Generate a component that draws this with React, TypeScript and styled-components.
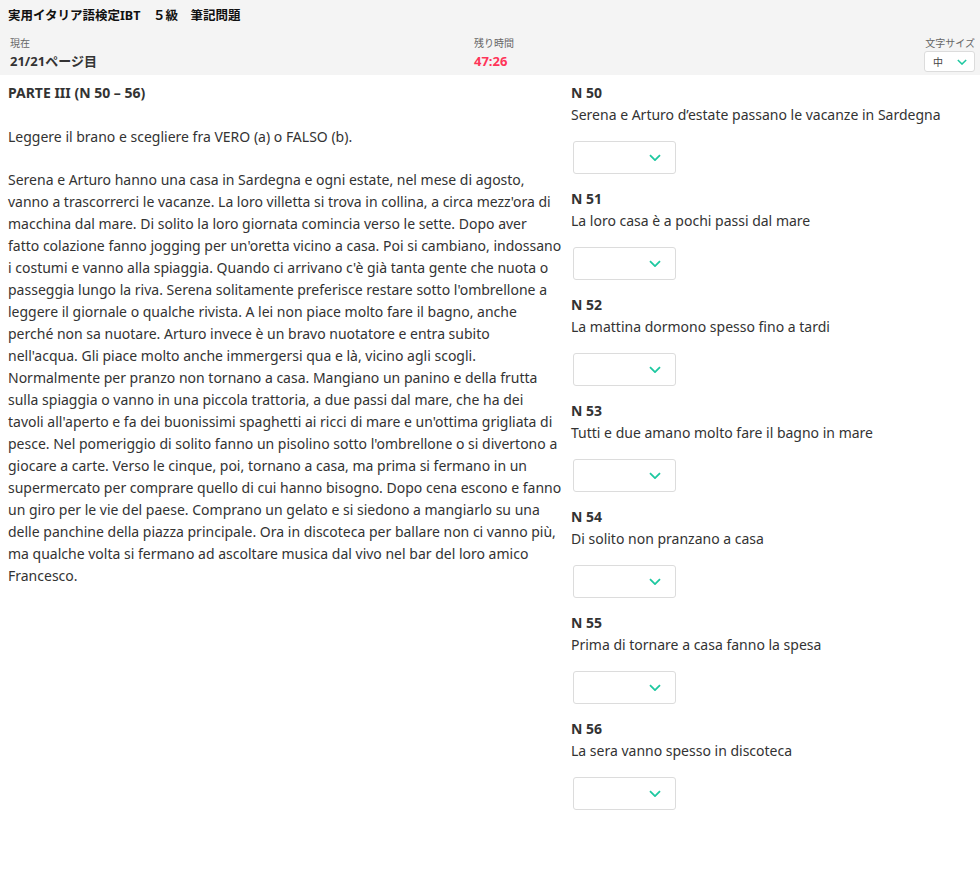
import React from 'react';
import styled, { createGlobalStyle } from 'styled-components';

const colors = {
  text: '#333333',
  label: '#666666',
  headerBg: '#f4f4f4',
  border: '#dcdcdc',
  accent: '#1ec8a0',
  timer: '#ff3559',
};

const GlobalStyle = createGlobalStyle`
  body {
    margin: 0;
    background: #ffffff;
    font-family: 'Noto Sans', 'Noto Sans CJK JP', sans-serif;
    color: ${colors.text};
  }
`;

// line breaks follow the exam page
const passageLines = [
  'Serena e Arturo hanno una casa in Sardegna e ogni estate, nel mese di agosto,',
  "vanno a trascorrerci le vacanze. La loro villetta si trova in collina, a circa mezz'ora di",
  'macchina dal mare. Di solito la loro giornata comincia verso le sette. Dopo aver',
  "fatto colazione fanno jogging per un'oretta vicino a casa. Poi si cambiano, indossano",
  "i costumi e vanno alla spiaggia. Quando ci arrivano c'è già tanta gente che nuota o",
  "passeggia lungo la riva. Serena solitamente preferisce restare sotto l'ombrellone a",
  'leggere il giornale o qualche rivista. A lei non piace molto fare il bagno, anche',
  'perché non sa nuotare. Arturo invece è un bravo nuotatore e entra subito',
  "nell'acqua. Gli piace molto anche immergersi qua e là, vicino agli scogli.",
  'Normalmente per pranzo non tornano a casa. Mangiano un panino e della frutta',
  'sulla spiaggia o vanno in una piccola trattoria, a due passi dal mare, che ha dei',
  "tavoli all'aperto e fa dei buonissimi spaghetti ai ricci di mare e un'ottima grigliata di",
  "pesce. Nel pomeriggio di solito fanno un pisolino sotto l'ombrellone o si divertono a",
  'giocare a carte. Verso le cinque, poi, tornano a casa, ma prima si fermano in un',
  'supermercato per comprare quello di cui hanno bisogno. Dopo cena escono e fanno',
  'un giro per le vie del paese. Comprano un gelato e si siedono a mangiarlo su una',
  'delle panchine della piazza principale. Ora in discoteca per ballare non ci vanno più,',
  'ma qualche volta si fermano ad ascoltare musica dal vivo nel bar del loro amico',
  'Francesco.',
];

const questions = [
  { no: 50, text: 'Serena e Arturo d’estate passano le vacanze in Sardegna' },
  { no: 51, text: 'La loro casa è a pochi passi dal mare' },
  { no: 52, text: 'La mattina dormono spesso fino a tardi' },
  { no: 53, text: 'Tutti e due amano molto fare il bagno in mare' },
  { no: 54, text: 'Di solito non pranzano a casa' },
  { no: 55, text: 'Prima di tornare a casa fanno la spesa' },
  { no: 56, text: 'La sera vanno spesso in discoteca' },
];

const Chevron: React.FC<{ size?: number }> = ({ size = 12 }) => (
  <svg width={size} height={size * 0.6} viewBox="0 0 12 7" fill="none">
    <path d="M1 1l5 5 5-5" stroke={colors.accent} strokeWidth="1.8" />
  </svg>
);

export default function App() {
  return (
    <Page>
      <GlobalStyle />
      <Header>
        <Title>実用イタリア語検定IBT　５級　筆記問題</Title>
        <StatusRow>
          <StatusItem>
            <StatusLabel>現在</StatusLabel>
            <StatusValue>21/21ページ目</StatusValue>
          </StatusItem>
          <StatusItem>
            <StatusLabel>残り時間</StatusLabel>
            <StatusValue warn>47:26</StatusValue>
          </StatusItem>
          <StatusItem align="right">
            <StatusLabel>文字サイズ</StatusLabel>
            <SizeSelect>
              <span>中</span>
              <Chevron size={10} />
            </SizeSelect>
          </StatusItem>
        </StatusRow>
      </Header>
      <Content>
        <Passage>
          <SectionTitle>PARTE III (N 50 – 56)</SectionTitle>
          <Paragraph>Leggere il brano e scegliere fra VERO (a) o FALSO (b).</Paragraph>
          <Paragraph>
            {passageLines.map((line, i) => (
              <Line key={i}>{line}</Line>
            ))}
          </Paragraph>
        </Passage>
        <QuestionList>
          {questions.map((q) => (
            <Question key={q.no}>
              <QuestionNo>N {q.no}</QuestionNo>
              <QuestionText>{q.text}</QuestionText>
              <AnswerSelect>
                <Chevron />
              </AnswerSelect>
            </Question>
          ))}
        </QuestionList>
      </Content>
    </Page>
  );
}

const Page = styled.div`
  width: 980px;
  min-height: 884px;
  background: #fff;
`;

const Header = styled.header`
  background: ${colors.headerBg};
  padding: 7px 5px 4px 8px;
  height: 75px;
  box-sizing: border-box;
`;

const Title = styled.h1`
  margin: 0;
  font-size: 12.5px;
  font-weight: 700;
  line-height: 18px;
  color: #111;
`;

const StatusRow = styled.div`
  display: grid;
  grid-template-columns: 464px 1fr auto;
  margin-top: 11px;
  padding-left: 2px;
`;

const StatusItem = styled.div<{ align?: 'right' }>`
  display: flex;
  flex-direction: column;
  align-items: ${(p) => (p.align === 'right' ? 'flex-end' : 'flex-start')};
`;

const StatusLabel = styled.div`
  font-size: 10px;
  line-height: 14px;
  color: ${colors.label};
`;

const StatusValue = styled.div<{ warn?: boolean }>`
  font-size: 13px;
  font-weight: 700;
  line-height: 22px;
  color: ${(p) => (p.warn ? colors.timer : '#333')};
`;

const SizeSelect = styled.div`
  width: 51px;
  height: 21px;
  margin-top: 1px;
  box-sizing: border-box;
  border: 1px solid ${colors.border};
  border-radius: 3px;
  background: #fff;
  display: flex;
  align-items: center;
  justify-content: space-between;
  padding: 0 7px 0 8px;
  font-size: 10px;
  color: #444;
`;

const Content = styled.main`
  display: grid;
  grid-template-columns: 556px 1fr;
  column-gap: 7px;
  padding: 7px 8px 0 8px;
`;

const Passage = styled.section`
  font-size: 14px;
  line-height: 22px;
`;

const SectionTitle = styled.h2`
  margin: 0 0 22px 0;
  font-size: 14px;
  font-weight: 700;
  line-height: 22px;
`;

const Paragraph = styled.p`
  margin: 0 0 21px 0;
`;

const Line = styled.span`
  display: block;
  white-space: nowrap;
`;

const QuestionList = styled.section`
  display: flex;
  flex-direction: column;
`;

const Question = styled.div`
  height: 106px;
`;

const QuestionNo = styled.div`
  font-size: 14px;
  font-weight: 700;
  line-height: 22px;
`;

const QuestionText = styled.div`
  font-size: 14px;
  line-height: 22px;
`;

const AnswerSelect = styled.div`
  margin: 15px 0 0 2px;
  width: 103px;
  height: 33px;
  box-sizing: border-box;
  border: 1px solid ${colors.border};
  border-radius: 3px;
  display: flex;
  align-items: center;
  justify-content: flex-end;
  padding-right: 14px;
`;
